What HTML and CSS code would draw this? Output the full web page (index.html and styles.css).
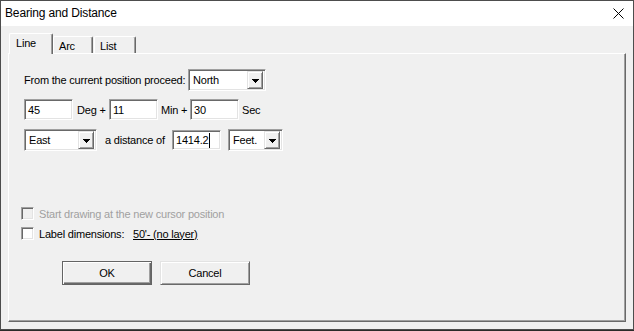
FILE: index.html
```html
<!DOCTYPE html>
<html>
<head>
<meta charset="utf-8">
<title>Bearing and Distance</title>
<link rel="stylesheet" href="styles.css">
</head>
<body>
<div class="window">
  <div class="titlebar">
    <span class="title">Bearing and Distance</span>
    <span class="close"><svg width="11" height="11" viewBox="0 0 11 11"><path d="M0.5 0.5L10.5 10.5M10.5 0.5L0.5 10.5" stroke="#000" stroke-width="1" fill="none"/></svg></span>
  </div>
  <div class="client">
    <div class="tabs">
      <div class="tab active">Line</div>
      <div class="tab t-arc">Arc</div>
      <div class="tab t-list">List</div>
    </div>
    <div class="panel">
      <div class="row r1">
        <span class="lbl l-from">From the current position proceed:</span>
        <div class="combo w-north"><span class="combo-text">North</span><span class="combo-btn"><svg width="7" height="4" viewBox="0 0 7 4" shape-rendering="crispEdges"><rect x="0" y="0" width="7" height="1"/><rect x="1" y="1" width="5" height="1"/><rect x="2" y="2" width="3" height="1"/><rect x="3" y="3" width="1" height="1"/></svg></span></div>
      </div>
      <div class="row r2">
        <div class="edit"><span>45</span></div>
        <span class="lbl l-deg">Deg +</span>
        <div class="edit"><span>11</span></div>
        <span class="lbl l-min">Min +</span>
        <div class="edit"><span>30</span></div>
        <span class="lbl l-sec">Sec</span>
      </div>
      <div class="row r3">
        <div class="combo w-east"><span class="combo-text">East</span><span class="combo-btn"><svg width="7" height="4" viewBox="0 0 7 4" shape-rendering="crispEdges"><rect x="0" y="0" width="7" height="1"/><rect x="1" y="1" width="5" height="1"/><rect x="2" y="2" width="3" height="1"/><rect x="3" y="3" width="1" height="1"/></svg></span></div>
        <span class="lbl l-dist">a distance of</span>
        <div class="edit e-dist"><span>1414.2</span><span class="caret"></span></div>
        <div class="combo w-feet"><span class="combo-text">Feet.</span><span class="combo-btn"><svg width="7" height="4" viewBox="0 0 7 4" shape-rendering="crispEdges"><rect x="0" y="0" width="7" height="1"/><rect x="1" y="1" width="5" height="1"/><rect x="2" y="2" width="3" height="1"/><rect x="3" y="3" width="1" height="1"/></svg></span></div>
      </div>
      <div class="check c1 disabled"><span class="box"></span><span class="ctext">Start drawing at the new cursor position</span></div>
      <div class="check c2"><span class="box"></span><span class="ctext l-labdim">Label dimensions:</span><span class="link">50'- (no layer)</span></div>
      <div class="buttons">
        <div class="btn default">OK</div>
        <div class="btn">Cancel</div>
      </div>
    </div>
  </div>
</div>
</body>
</html>
```
FILE: styles.css
```css
* { box-sizing: border-box; }
html, body { margin: 0; padding: 0; }
body {
  background: #2b2b29;
  width: 634px;
  height: 331px;
  overflow: hidden;
  font-family: "Liberation Sans", Arial, sans-serif;
  font-size: 11px;
  letter-spacing: -0.2px;
  color: #000;
}
.window {
  width: 634px;
  height: 330px;
  border: 1px solid #4d4d4d;
  background: #f0f0f0;
  display: flex;
  flex-direction: column;
}
.titlebar {
  height: 25px;
  background: #fff;
  display: flex;
  align-items: center;
  justify-content: space-between;
  padding-left: 4px;
}
.title {
  font-size: 12px;
  letter-spacing: -0.15px;
  padding-bottom: 1px;
}
.close {
  display: flex;
  margin-right: 9px;
}
.client {
  padding: 7px 6px 0 7px;
}
.tabs {
  display: flex;
  align-items: flex-end;
  height: 20px;
  padding-left: 1px;
}
.tab {
  height: 17px;
  padding: 3px 0 0 5px;
  border-top: 1px solid #fff;
  border-left: 1px solid #fff;
  border-right: 1px solid #696969;
  box-shadow: inset -1px 0 0 #a0a0a0;
  border-top-left-radius: 2px;
  border-top-right-radius: 2px;
  background: #f0f0f0;
}
.tab.active {
  height: 21px;
  width: 44px;
  margin-bottom: -1px;
  padding-left: 6px;
  padding-top: 3px;
  position: relative;
  z-index: 1;
}
.t-arc { width: 40px; }
.t-list { width: 42px; margin-left: 1px; }
.panel {
  width: 618px;
  height: 269px;
  border-top: 1px solid #fff;
  border-left: 1px solid #fff;
  border-right: 1px solid #696969;
  border-bottom: 1px solid #696969;
  box-shadow: inset -1px -1px 0 #a0a0a0;
  padding: 15px 0 0 15px;
  display: flex;
  flex-direction: column;
}
.row {
  display: flex;
  align-items: center;
}
.r1 { height: 22px; }
.r2 { height: 21px; margin-top: 8px; }
.r3 { height: 22px; margin-top: 9px; }
.lbl { white-space: nowrap; }
.l-from { width: 164px; }
.l-deg { width: 32px; margin-left: 4px; }
.l-min { width: 29px; margin-left: 3px; }
.l-sec { margin-left: 3px; }
.l-dist { width: 67px; margin-left: 8px; }
.edit, .combo {
  background: #fff;
  border-top: 1px solid #a0a0a0;
  border-left: 1px solid #a0a0a0;
  border-right: 1px solid #fff;
  border-bottom: 1px solid #fff;
  box-shadow: inset 1px 1px 0 #696969, inset -1px -1px 0 #e3e3e3;
  display: flex;
  align-items: center;
}
.edit {
  width: 49px;
  height: 21px;
  padding-left: 3px;
}
.e-dist { height: 20px; }
.caret {
  display: inline-block;
  width: 1px;
  height: 15px;
  background: #000;
  margin-left: 1px;
}
.combo {
  height: 22px;
  padding: 2px;
  justify-content: space-between;
}
.combo-text { padding-left: 2px; }
.combo-btn {
  width: 16px;
  height: 18px;
  background: #f0f0f0;
  border-top: 1px solid #e3e3e3;
  border-left: 1px solid #e3e3e3;
  border-right: 1px solid #696969;
  border-bottom: 1px solid #696969;
  box-shadow: inset 1px 1px 0 #fff, inset -1px -1px 0 #a0a0a0;
  display: flex;
  align-items: center;
  justify-content: center;
  padding-top: 1px;
}
.w-north { width: 78px; }
.w-east { width: 73px; }
.w-feet { width: 55px; margin-left: 7px; }
.check {
  display: flex;
  align-items: center;
  height: 13px;
  margin-left: -3px;
}
.c1 { margin-top: 56px; }
.c2 { margin-top: 7px; }
.box {
  width: 13px;
  height: 13px;
  background: #fff;
  border-top: 1px solid #a0a0a0;
  border-left: 1px solid #a0a0a0;
  border-right: 1px solid #fff;
  border-bottom: 1px solid #fff;
  box-shadow: inset 1px 1px 0 #696969, inset -1px -1px 0 #e3e3e3;
  margin-right: 5px;
  flex: none;
}
.disabled .box { background: #f0f0f0; }
.disabled .ctext { color: #a0a0a0; }
.l-labdim { width: 94px; white-space: nowrap; }
.link { text-decoration: underline; white-space: nowrap; }
.buttons {
  display: flex;
  gap: 8px;
  margin-top: 21px;
  margin-left: 38px;
}
.btn {
  width: 90px;
  height: 24px;
  display: flex;
  align-items: center;
  justify-content: center;
  background: #f0f0f0;
  border-top: 1px solid #e3e3e3;
  border-left: 1px solid #e3e3e3;
  border-right: 1px solid #696969;
  border-bottom: 1px solid #696969;
  box-shadow: inset 1px 1px 0 #fff, inset -1px -1px 0 #a0a0a0;
}
.btn.default {
  border: 1px solid #646464;
  box-shadow: inset 1px 1px 0 #fff, inset -1px -1px 0 #696969, inset -2px -2px 0 #a0a0a0;
}
```
